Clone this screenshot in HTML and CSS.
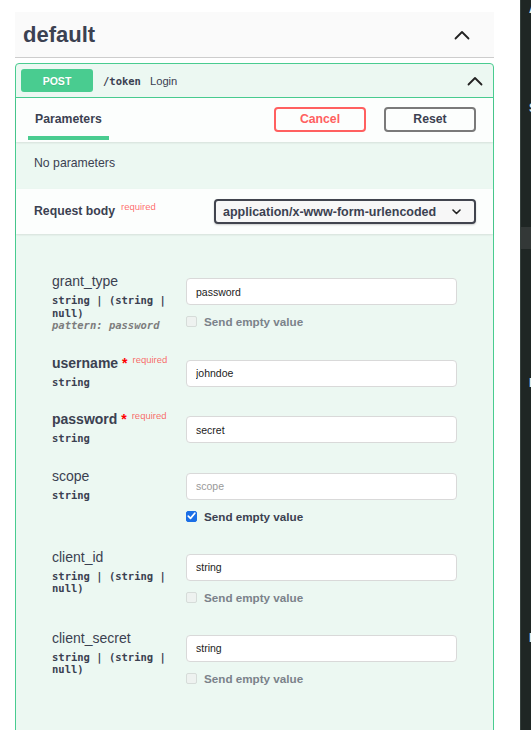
FILE: index.html
```html
<!DOCTYPE html>
<html lang="en">
<head>
<meta charset="utf-8">
<title>default - POST /token</title>
<link rel="stylesheet" href="styles.css">
</head>
<body>
<div class="page">
  <div class="main">
    <section class="tag">
      <div class="tag-head">
        <h3 class="tag-title">default</h3>
        <svg class="chev" width="16" height="10" viewBox="0 0 16 10"><path d="M1.5 8.5 L8 2 L14.5 8.5" fill="none" stroke="#222" stroke-width="1.8" stroke-linecap="round" stroke-linejoin="round"/></svg>
      </div>
      <div class="opblock">
        <div class="summary">
          <span class="method">POST</span>
          <span class="path">/token</span>
          <span class="desc">Login</span>
          <svg class="chev sum-chev" width="16" height="10" viewBox="0 0 16 10"><path d="M1.5 8.5 L8 2 L14.5 8.5" fill="none" stroke="#222" stroke-width="1.8" stroke-linecap="round" stroke-linejoin="round"/></svg>
        </div>
        <div class="tabhead">
          <div class="tab">Parameters</div>
          <div class="btns">
            <button class="btn cancel">Cancel</button>
            <button class="btn reset">Reset</button>
          </div>
        </div>
        <div class="noparams">No parameters</div>
        <div class="rbhead">
          <div class="rbtitle">Request body<span class="req">required</span></div>
          <div class="select">
            <span>application/x-www-form-urlencoded</span>
            <svg width="9" height="6" viewBox="0 0 9 6"><path d="M1 1 L4.5 4.5 L8 1" fill="none" stroke="#222" stroke-width="1.6" stroke-linecap="round" stroke-linejoin="round"/></svg>
          </div>
        </div>
        <div class="form">
          <div class="param">
            <div class="pname">
              <div class="nm">grant_type</div>
              <div class="ptype">string | (string | null)</div>
              <div class="pattern">pattern: password</div>
            </div>
            <div class="pval">
              <input class="inp" type="text" value="password">
              <div class="empty"><span class="cb"></span>Send empty value</div>
            </div>
          </div>
          <div class="param">
            <div class="pname">
              <div class="nm required">username<span class="star">&nbsp;*</span><span class="rq">required</span></div>
              <div class="ptype">string</div>
            </div>
            <div class="pval">
              <input class="inp" type="text" value="johndoe">
            </div>
          </div>
          <div class="param">
            <div class="pname">
              <div class="nm required">password<span class="star">&nbsp;*</span><span class="rq">required</span></div>
              <div class="ptype">string</div>
            </div>
            <div class="pval">
              <input class="inp" type="text" value="secret">
            </div>
          </div>
          <div class="param">
            <div class="pname">
              <div class="nm">scope</div>
              <div class="ptype">string</div>
            </div>
            <div class="pval">
              <input class="inp" type="text" placeholder="scope">
              <div class="empty on"><span class="cb checked"><svg width="9" height="8" viewBox="0 0 9 8"><path d="M1.3 4.2 L3.5 6.4 L7.8 1.2" fill="none" stroke="#fff" stroke-width="1.7" stroke-linecap="round" stroke-linejoin="round"/></svg></span>Send empty value</div>
            </div>
          </div>
          <div class="param">
            <div class="pname">
              <div class="nm">client_id</div>
              <div class="ptype">string | (string | null)</div>
            </div>
            <div class="pval">
              <input class="inp" type="text" value="string">
              <div class="empty"><span class="cb"></span>Send empty value</div>
            </div>
          </div>
          <div class="param">
            <div class="pname">
              <div class="nm">client_secret</div>
              <div class="ptype">string | (string | null)</div>
            </div>
            <div class="pval">
              <input class="inp" type="text" value="string">
              <div class="empty"><span class="cb"></span>Send empty value</div>
            </div>
          </div>
        </div>
      </div>
    </section>
  </div>
  <aside class="side">
    <div class="s1">A</div>
    <div class="s2">S</div>
    <div class="sblock"></div>
    <div class="s3">I</div>
    <div class="s4">I</div>
  </aside>
</div>
</body>
</html>
```
FILE: styles.css
```css
html, body {
  margin: 0;
  padding: 0;
  background: #fff;
}
body {
  font-family: "Liberation Sans", Arial, sans-serif;
  color: #3b4151;
  overflow: hidden;
}
.page {
  display: flex;
  height: 730px;
}
.main {
  width: 520px;
  flex: none;
  box-sizing: border-box;
  padding: 12px 26px 0 15px;
}
.tag-head {
  height: 45px;
  display: flex;
  align-items: center;
  justify-content: space-between;
  padding: 0 24px 0 8px;
  background: #fafafa;
  border-bottom: 1px solid #cdcdcd;
}
.tag-title {
  margin: 0;
  font-size: 22px;
  font-weight: bold;
  color: #3b4151;
}
.chev {
  display: block;
}
.opblock {
  margin-top: 5px;
  border: 1px solid #49cc90;
  border-radius: 4px;
  background: #ecf8f2;
}
.summary {
  display: flex;
  align-items: center;
  padding: 5px 10px 5px 5px;
  border-bottom: 1px solid #49cc90;
}
.method {
  width: 72px;
  height: 23px;
  border-radius: 3px;
  background: #49cc90;
  color: #fff;
  font-weight: bold;
  font-size: 10.5px;
  display: flex;
  align-items: center;
  justify-content: center;
  text-shadow: 0 1px 0 rgba(0,0,0,.1);
}
.path {
  margin-left: 10px;
  font: bold 10.5px "DejaVu Sans Mono", monospace;
  color: #3b4151;
}
.desc {
  margin-left: 9px;
  font-size: 11.2px;
  color: #3b4151;
}
.sum-chev {
  margin-left: auto;
}
.tabhead {
  height: 44px;
  display: flex;
  justify-content: space-between;
  padding: 0 17px 0 12px;
  background: rgba(255,255,255,.82);
  box-shadow: 0 1px 2px rgba(0,0,0,.1);
  position: relative;
}
.tab {
  align-self: flex-end;
  margin-bottom: 2px;
  padding: 0 7px 9px;
  border-bottom: 4px solid #49cc90;
  font-weight: bold;
  font-size: 12.25px;
  line-height: 15px;
}
.btns {
  display: flex;
  align-items: center;
  gap: 18px;
  margin-bottom: 2px;
}
.btn {
  width: 92px;
  height: 25px;
  box-sizing: border-box;
  border: 2px solid #7a7a7a;
  border-radius: 4px;
  background: transparent;
  font: bold 12.25px "Liberation Sans", Arial, sans-serif;
  color: #3b4151;
  padding: 0;
}
.cancel {
  border-color: #ff6060;
  color: #ff6060;
}
.noparams {
  height: 47px;
  box-sizing: border-box;
  padding: 14px 0 0 18px;
  font-size: 12.25px;
  line-height: 15px;
}
.rbhead {
  height: 45px;
  display: flex;
  align-items: center;
  justify-content: space-between;
  padding: 0 17px 0 18px;
  background: rgba(255,255,255,.82);
  box-shadow: 0 1px 2px rgba(0,0,0,.1);
  position: relative;
}
.rbtitle {
  font-weight: bold;
  font-size: 12.25px;
  line-height: 15px;
}
.req {
  color: rgba(255,0,0,.6);
  font-size: 9.5px;
  line-height: 0;
  font-weight: normal;
  vertical-align: 5px;
  margin-left: 6px;
}
.select {
  width: 262px;
  height: 25px;
  box-sizing: border-box;
  border: 2px solid #41444e;
  border-radius: 4px;
  display: flex;
  align-items: center;
  justify-content: space-between;
  padding: 0 13px 0 7px;
  font-weight: bold;
  font-size: 12.5px;
  background: #f7f7f7;
  box-shadow: 0 1px 2px rgba(0,0,0,.2);
}
.form {
  padding: 40px 0 80px 36px;
}
.param {
  display: flex;
  margin-bottom: 24px;
}
.pname {
  width: 134px;
  flex: none;
}
.nm {
  font-size: 14px;
  line-height: 15px;
  height: 15px;
  white-space: nowrap;
}
.nm.required {
  font-weight: bold;
}
.star {
  color: red;
}
.rq {
  color: rgba(255,0,0,.6);
  font-size: 9.5px;
  line-height: 0;
  font-weight: normal;
  vertical-align: 5px;
  margin-left: 5px;
}
.ptype {
  margin-top: 5px;
  font: bold 10.5px/12.5px "DejaVu Sans Mono", monospace;
  color: #3b4151;
}
.pattern {
  font: italic bold 10.5px/12.5px "DejaVu Sans Mono", monospace;
  color: #7d7d7d;
}
.pval {
  padding-top: 4px;
}
.inp {
  display: block;
  width: 271px;
  height: 27px;
  box-sizing: border-box;
  margin: 0;
  border: 1px solid #d9d9d9;
  border-radius: 4px;
  padding: 0 9px;
  font: 10.5px "Liberation Sans", Arial, sans-serif;
  color: #222;
  background: #fff;
  outline: none;
}
.inp::placeholder {
  color: #999;
}
.empty {
  margin-top: 7px;
  height: 19px;
  display: flex;
  align-items: center;
  gap: 7px;
  font: bold 11.67px "Liberation Sans", Arial, sans-serif;
  color: #7b828a;
}
.empty.on {
  color: #3b4151;
}
.cb {
  width: 11px;
  height: 11px;
  box-sizing: border-box;
  border: 1px solid #d6dcd9;
  border-radius: 2px;
  background: #eef2f0;
  flex: none;
}
.cb.checked {
  background: #1b6fe6;
  border-color: #1b6fe6;
  display: flex;
  align-items: center;
  justify-content: center;
}
.side {
  flex: 1;
  background: #1f2624;
  border-left: 1px solid #36403d;
  overflow: hidden;
  color: #e8e8e8;
  font: bold 12px/15px "Liberation Sans", Arial, sans-serif;
  padding-left: 8px;
}
.s1 { margin-top: 2px; }
.s2 { margin-top: 84px; }
.sblock {
  margin: 111px 0 0 -8px;
  height: 22px;
  background: #333837;
}
.s3 { margin-top: 127px; }
.s4 { margin-top: 240px; }
```
